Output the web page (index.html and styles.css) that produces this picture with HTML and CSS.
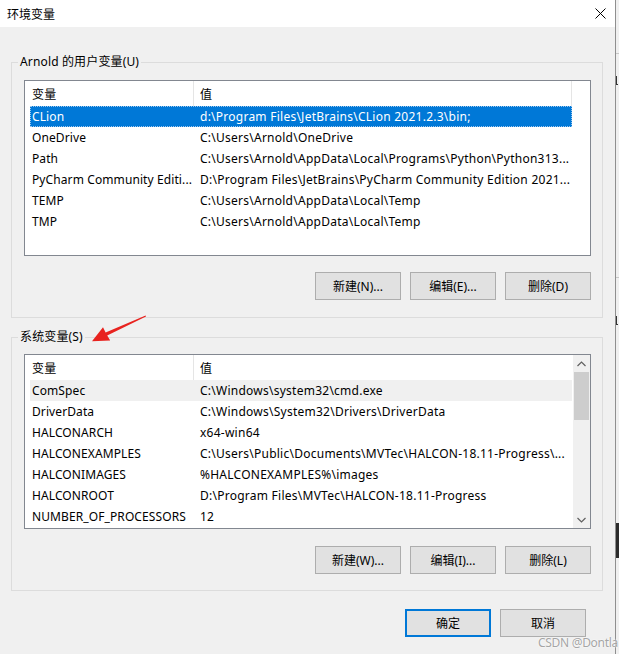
FILE: index.html
```html
<!DOCTYPE html>
<html lang="zh-CN">
<head>
<meta charset="utf-8">
<title>环境变量</title>
<link rel="stylesheet" href="styles.css">
</head>
<body>
<div class="screen">
  <div class="window">
    <div class="titlebar">
      <span class="title">环境变量</span>
      <span class="close"><svg width="11" height="11" viewBox="0 0 11 11"><path d="M0.5 0.5 L10.5 10.5 M10.5 0.5 L0.5 10.5" stroke="#000" stroke-width="1" fill="none"/></svg></span>
    </div>
    <div class="body">
      <fieldset class="group group-user">
        <legend>Arnold 的用户变量(U)</legend>
        <div class="group-body">
          <div class="list list-user">
            <div class="lv-header">
              <div class="hc c1">变量</div>
              <div class="hc c2">值</div>
              <div class="hc c3"></div>
            </div>
            <div class="lv-rows">
              <div class="row selected"><span class="cell c1">CLion</span><span class="cell c2">d:\Program Files\JetBrains\CLion 2021.2.3\bin;</span></div>
              <div class="row"><span class="cell c1">OneDrive</span><span class="cell c2">C:\Users\Arnold\OneDrive</span></div>
              <div class="row"><span class="cell c1">Path</span><span class="cell c2">C:\Users\Arnold\AppData\Local\Programs\Python\Python313...</span></div>
              <div class="row"><span class="cell c1">PyCharm Community Editi...</span><span class="cell c2">D:\Program Files\JetBrains\PyCharm Community Edition 2021...</span></div>
              <div class="row"><span class="cell c1">TEMP</span><span class="cell c2">C:\Users\Arnold\AppData\Local\Temp</span></div>
              <div class="row"><span class="cell c1">TMP</span><span class="cell c2">C:\Users\Arnold\AppData\Local\Temp</span></div>
            </div>
          </div>
          <div class="btnrow btnrow-user">
            <button class="btn">新建(N)...</button>
            <button class="btn">编辑(E)...</button>
            <button class="btn">删除(D)</button>
          </div>
        </div>
      </fieldset>

      <fieldset class="group group-sys">
        <legend>系统变量(S)</legend>
        <div class="group-body">
          <div class="list list-sys">
            <div class="lv-main">
              <div class="lv-header">
                <div class="hc c1">变量</div>
                <div class="hc c2">值</div>
              </div>
              <div class="lv-rows">
                <div class="row hot"><span class="cell c1">ComSpec</span><span class="cell c2">C:\Windows\system32\cmd.exe</span></div>
                <div class="row"><span class="cell c1">DriverData</span><span class="cell c2">C:\Windows\System32\Drivers\DriverData</span></div>
                <div class="row"><span class="cell c1">HALCONARCH</span><span class="cell c2">x64-win64</span></div>
                <div class="row"><span class="cell c1">HALCONEXAMPLES</span><span class="cell c2">C:\Users\Public\Documents\MVTec\HALCON-18.11-Progress\...</span></div>
                <div class="row"><span class="cell c1">HALCONIMAGES</span><span class="cell c2">%HALCONEXAMPLES%\images</span></div>
                <div class="row"><span class="cell c1">HALCONROOT</span><span class="cell c2">D:\Program Files\MVTec\HALCON-18.11-Progress</span></div>
                <div class="row"><span class="cell c1">NUMBER_OF_PROCESSORS</span><span class="cell c2">12</span></div>
              </div>
            </div>
            <div class="scrollbar">
              <div class="sb-btn"><svg width="9" height="6" viewBox="0 0 9 6"><path d="M0.5 5 L4.5 1 L8.5 5" stroke="#606060" stroke-width="1.2" fill="none"/></svg></div>
              <div class="sb-thumb"></div>
              <div class="sb-track"></div>
              <div class="sb-btn"><svg width="9" height="6" viewBox="0 0 9 6"><path d="M0.5 1 L4.5 5 L8.5 1" stroke="#606060" stroke-width="1.2" fill="none"/></svg></div>
            </div>
          </div>
          <div class="btnrow btnrow-sys">
            <button class="btn">新建(W)...</button>
            <button class="btn">编辑(I)...</button>
            <button class="btn">删除(L)</button>
          </div>
        </div>
      </fieldset>

      <div class="dialog-buttons">
        <button class="btn btn-default">确定</button>
        <button class="btn">取消</button>
      </div>
    </div>

    <svg class="arrow" width="70" height="45" viewBox="85 305 70 45">
      <polygon points="145.6,315.4 146,316.6 107.2,335.6 110.2,340.6 92,341.2 103,327.2 105.6,332.4" fill="#e8231f"/>
    </svg>
  </div>
  <div class="edge">
    <div class="edge-a"></div>
    <div class="edge-line"></div>
    <div class="edge-b"></div>
    <div class="edge-glyph"></div>
    <div class="edge-c"></div>
    <div class="edge-line"></div>
    <div class="edge-d"></div>
    <div class="edge-glyph"></div>
    <div class="edge-e"></div>
    <div class="edge-dark"></div>
  </div>
  <div class="watermark">CSDN @Dontla</div>
</div>
</body>
</html>
```

FILE: styles.css
```css
* { box-sizing: border-box; }

html, body {
  margin: 0;
  padding: 0;
}

body {
  width: 619px;
  height: 654px;
  overflow: hidden;
  background: #f0f0f0;
  font-family: "Noto Sans", "Noto Sans CJK SC", sans-serif;
  font-size: 12px;
  color: #000;
}

.screen {
  position: relative;
  display: flex;
  width: 619px;
  height: 654px;
}

.window {
  position: relative;
  width: 616px;
  height: 654px;
  flex: none;
  background: #f0f0f0;
  border-right: 1px solid #8f8f8f;
  display: flex;
  flex-direction: column;
}

.titlebar {
  height: 27px;
  flex: none;
  background: #fff;
  display: flex;
  align-items: center;
  justify-content: space-between;
  padding: 0 9px 0 7px;
}

.title {
  font-family: "Noto Sans CJK SC", sans-serif;
  font-size: 12px;
  line-height: 16px;
}

.close svg { display: block; }

.body {
  padding: 0 12px 0 11px;
}

.group {
  margin: 0;
  padding: 0;
  border: 1px solid #dcdcdc;
  min-width: 0;
}

.group-user { margin-top: 27px; }
.group-sys { margin-top: 11px; }

.group legend {
  margin-left: 6px;
  padding: 0 2px;
  line-height: 16px;
  font-size: 12px;
  letter-spacing: 0.15px;
}

.group-body {
  padding: 10px 11px 17px 12px;
}

.group-sys .group-body {
  padding-top: 9px;
  padding-bottom: 16px;
}

.list {
  border: 1px solid #828790;
  background: #fff;
  letter-spacing: 0.25px;
}

.list-user { height: 176px; }

.list-sys {
  height: 175px;
  display: flex;
}

.lv-main {
  flex: 1;
  min-width: 0;
}

.lv-header {
  height: 25px;
  display: flex;
}

.hc {
  height: 25px;
  display: flex;
  align-items: center;
  border-right: 1px solid #e5e5e5;
  white-space: nowrap;
}

.hc.c1 { width: 169px; padding-left: 7px; }
.hc.c2 { width: 378px; padding-left: 6px; }
.hc.c3 { flex: 1; border-right: 0; }
.list-sys .hc.c2 { flex: 1; width: auto; border-right: 0; }

.lv-rows { padding-left: 5px; }

.row {
  display: flex;
  align-items: center;
  width: 542px;
  height: 21px;
  white-space: nowrap;
}

.cell {
  overflow: hidden;
  white-space: nowrap;
}

.cell.c1 { width: 164px; padding-left: 2px; flex: none; letter-spacing: 0.1px; }
.cell.c2 { flex: 1; padding-left: 6px; }

.row.selected {
  background: #0078d7;
  color: #fff;
  outline: 1px dotted #9dc7ee;
  outline-offset: -1px;
}

.row.hot { background: #f0f0f0; }

.scrollbar {
  width: 17px;
  flex: none;
  background: #f0f0f0;
  display: flex;
  flex-direction: column;
}

.sb-btn {
  height: 17px;
  flex: none;
  display: flex;
  align-items: center;
  justify-content: center;
}

.sb-btn svg { display: block; }

.sb-thumb {
  height: 48px;
  flex: none;
  margin: 0 1px;
  background: #cdcdcd;
}

.sb-track { flex: 1; }

.btnrow {
  display: flex;
  justify-content: flex-end;
  gap: 9px;
}

.btnrow-user { margin-top: 16px; }
.btnrow-sys { margin-top: 17px; }

.btn {
  width: 86px;
  height: 28px;
  margin: 0;
  padding: 0;
  background: #e1e1e1;
  border: 1px solid #adadad;
  border-radius: 0;
  font-family: "Noto Sans", "Noto Sans CJK SC", sans-serif;
  font-size: 12px;
  color: #000;
}

.btn-default {
  border: 2px solid #0078d7;
}

.dialog-buttons {
  display: flex;
  justify-content: flex-end;
  gap: 9px;
  margin-top: 18px;
  padding-right: 17px;
}

.arrow {
  position: absolute;
  left: 85px;
  top: 305px;
}

.edge {
  width: 3px;
  flex: none;
  background: #f0f0f0;
  display: flex;
  flex-direction: column;
}

.edge-a { height: 53px; }
.edge-line { height: 1px; background: #c8c8c8; }
.edge-b { height: 22px; }
.edge-glyph { height: 9px; width: 2px; border-left: 1px solid #333; border-bottom: 1px solid #333; }
.edge-c { height: 192px; }
.edge-d { height: 38px; }
.edge-e { height: 198px; }
.edge-dark { height: 35px; background: #2b2b2b; }

.watermark {
  position: absolute;
  left: 538px;
  top: 634px;
  white-space: nowrap;
  font-family: "Noto Sans", sans-serif;
  font-size: 12px;
  line-height: 17px;
  color: #a5a5a5;
  text-shadow: 0 0 1px #fff, 0 0 2px #fff;
  letter-spacing: -0.3px;
}
```
